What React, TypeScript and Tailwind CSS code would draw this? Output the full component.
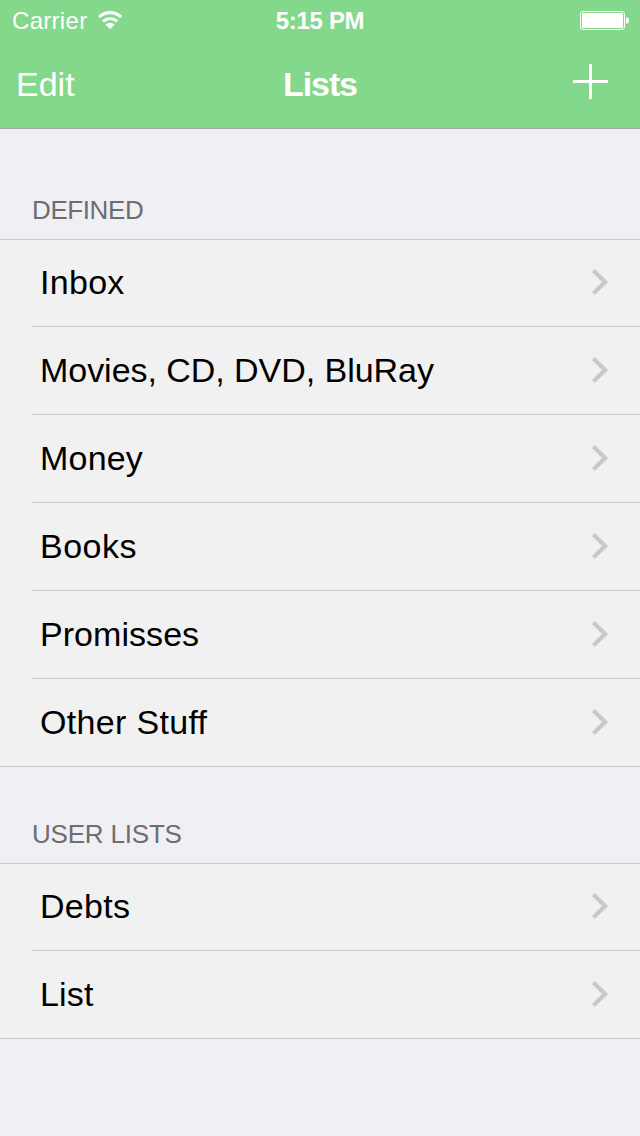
type ListSection = {
  title: string;
  titleClass: string;
  items: { label: string; tracking: string }[];
};

const SECTIONS: ListSection[] = [
  {
    title: "DEFINED",
    titleClass: "h-[110px] tracking-[-0.4px]",
    items: [
      { label: "Inbox", tracking: "tracking-[0.3px]" },
      { label: "Movies, CD, DVD, BluRay", tracking: "tracking-[-0.04px]" },
      { label: "Money", tracking: "tracking-[0.2px]" },
      { label: "Books", tracking: "tracking-[0.5px]" },
      { label: "Promisses", tracking: "tracking-[0.05px]" },
      { label: "Other Stuff", tracking: "tracking-[0.32px]" },
    ],
  },
  {
    title: "USER LISTS",
    titleClass: "h-[96px] tracking-[-0.2px]",
    items: [
      { label: "Debts", tracking: "tracking-[0.3px]" },
      { label: "List", tracking: "tracking-[0.2px]" },
    ],
  },
];

function WifiIcon() {
  return (
    <svg width="26" height="20" viewBox="0 0 26 20" fill="none" stroke="white" aria-hidden="true">
      <path d="M2.1 7.2a15.6 15.6 0 0 1 22 0" strokeWidth="3.1" />
      <path d="M6 11.6a10 10 0 0 1 14.2 0" strokeWidth="2.9" />
      <path d="M13.1 19.2l-4.7-4.7a7.2 7.2 0 0 1 9.4 0z" fill="white" stroke="none" />
    </svg>
  );
}

function BatteryIcon() {
  return (
    <svg width="50" height="20" viewBox="0 0 50 20" aria-hidden="true">
      <rect x="0.5" y="1.5" width="44" height="18" rx="2.5" fill="none" stroke="white" />
      <rect x="2" y="3" width="41" height="15" rx="1" fill="white" />
      <path d="M46 7.2c1.8 0.3 3 1.6 3 3.3s-1.2 3-3 3.3z" fill="white" />
    </svg>
  );
}

function Chevron() {
  return (
    <svg width="18" height="28" viewBox="0 0 18 28" fill="none" aria-hidden="true">
      <path d="M2.4 2.5L14.1 14L2.4 25.5" stroke="#c7c7cc" strokeWidth="4.2" />
    </svg>
  );
}

function StatusBar() {
  return (
    <div className="grid h-10 grid-cols-3 items-center">
      <div className="flex items-center gap-2.5 pl-3 text-2xl">
        <span className="pt-px tracking-[0.3px]">Carrier</span>
        <WifiIcon />
      </div>
      <span className="pt-px text-center text-2xl font-bold tracking-[-0.3px]">5:15 PM</span>
      <div className="flex justify-end pr-2.5">
        <BatteryIcon />
      </div>
    </div>
  );
}

function NavBar() {
  return (
    <div className="grid h-22 grid-cols-3 items-center">
      <button type="button" className="pl-4 text-left text-[34px]">
        Edit
      </button>
      <h1 className="text-center text-[34px] font-bold tracking-[-1.1px]">Lists</h1>
      <button type="button" aria-label="Add list" className="flex justify-end pr-8 pb-1.5">
        <svg width="35" height="35" viewBox="0 0 35 35" fill="white" aria-hidden="true">
          <path d="M16 0h3v16h16v3H19v16h-3V19H0v-3h16z" />
        </svg>
      </button>
    </div>
  );
}

function Section({ section }: { section: ListSection }) {
  return (
    <section>
      <h2 className={`flex items-end pb-3.5 pl-8 text-[26px] leading-[30px] text-[#6d6d72] ${section.titleClass}`}>
        {section.title}
      </h2>
      <ul className="border-y border-[#c8c7cc] bg-[#f1f1f1] pl-8">
        {section.items.map((item) => (
          <li
            key={item.label}
            className="flex h-22 items-center justify-between border-b border-[#c8c7cc] pr-[31px] pb-px pl-2 text-[34px] leading-[50px] text-black first:h-[87px] first:pb-0.5 last:h-[87px] last:border-b-0"
          >
            <span className={item.tracking}>{item.label}</span>
            <Chevron />
          </li>
        ))}
      </ul>
    </section>
  );
}

export default function App() {
  return (
    <main className="h-[1136px] w-[640px] overflow-hidden bg-[#efeff4] font-['Liberation_Sans',Arial,sans-serif]">
      <header className="border-b border-[#a7a7aa] bg-[#84d88b] text-white">
        <StatusBar />
        <NavBar />
      </header>
      {SECTIONS.map((section) => (
        <Section key={section.title} section={section} />
      ))}
    </main>
  );
}
